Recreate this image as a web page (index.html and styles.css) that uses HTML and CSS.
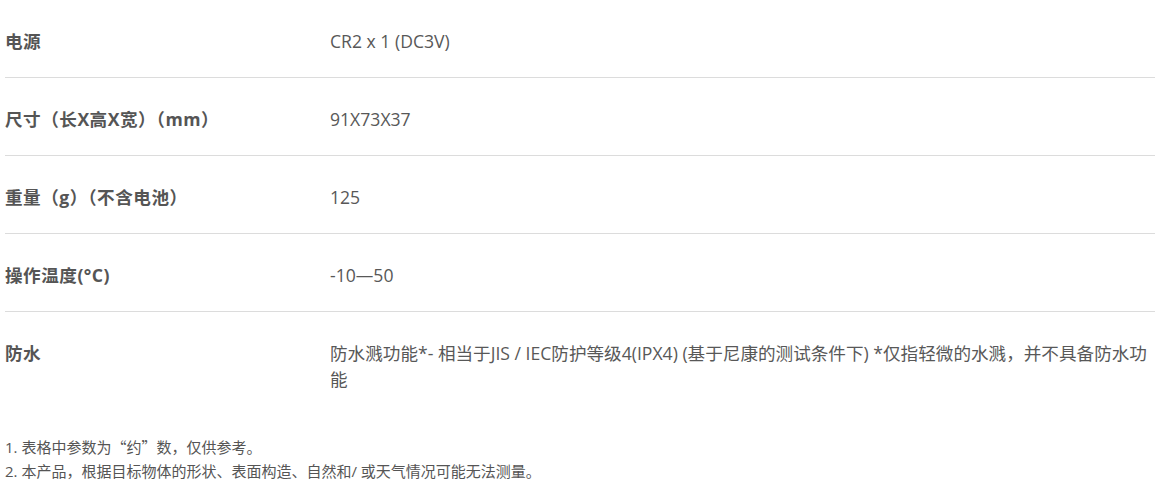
FILE: index.html
```html
<!DOCTYPE html>
<html lang="zh-CN">
<head>
<meta charset="utf-8">
<link rel="stylesheet" href="styles.css">
</head>
<body>
<div class="page">
  <div class="spec">
    <div class="row"><div class="label">电源</div><div class="value">CR2 x 1 (DC3V)</div></div>
    <div class="row"><div class="label">尺寸（长X高X宽）（mm）</div><div class="value">91X73X37</div></div>
    <div class="row"><div class="label">重量（g）（不含电池）</div><div class="value">125</div></div>
    <div class="row"><div class="label">操作温度(°C)</div><div class="value">-10—50</div></div>
    <div class="row last"><div class="label">防水</div><div class="value">防水溅功能*- 相当于JIS / IEC防护等级4(IPX4) (基于尼康的测试条件下) *仅指轻微的水溅，并不具备防水功能</div></div>
  </div>
  <div class="notes">
    <p>1. 表格中参数为<span class="cjk">“约”</span>数，仅供参考。</p>
    <p>2. 本产品，根据目标物体的形状、表面构造、自然和/ 或天气情况可能无法测量。</p>
  </div>
</div>
</body>
</html>
```
FILE: styles.css
```css
html, body {
  margin: 0;
  padding: 0;
  background: #fff;
}
.page {
  padding: 0 7px 0 5px;
  font-family: "Open Sans", "Noto Sans CJK SC", sans-serif;
  color: #555;
}
.spec {
  display: flex;
  flex-direction: column;
}
.row {
  display: flex;
  padding: 28px 0 23px;
  border-bottom: 1px solid #dcdcdc;
  font-size: 17.6px;
  line-height: 26px;
}
.row.last {
  border-bottom: none;
}
.label {
  width: 325px;
  flex: none;
  font-weight: bold;
  letter-spacing: 0.5px;
  color: #555;
}
.value {
  flex: 1;
  color: #585858;
}
.notes {
  padding-top: 20px;
  font-size: 15px;
  line-height: 24px;
}
.notes p {
  margin: 0;
}
.cjk {
  font-family: "Noto Sans CJK SC", sans-serif;
}
```
